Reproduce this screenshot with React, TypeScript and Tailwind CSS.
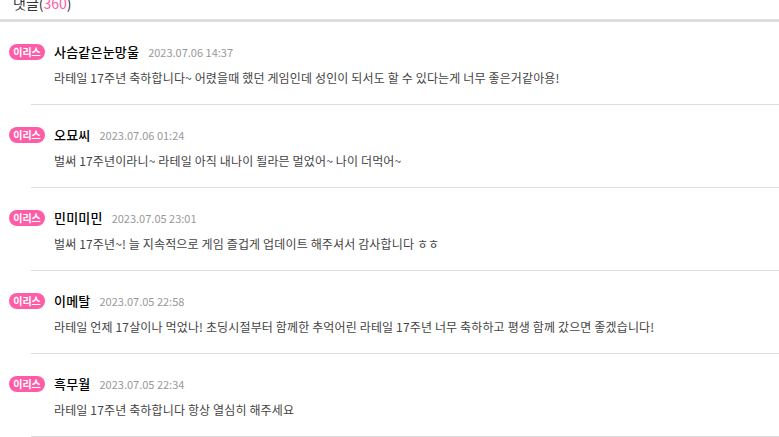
const comments = [
  { name: '사슴같은눈망울', date: '2023.07.06 14:37', text: '라테일 17주년 축하합니다~ 어렸을때 했던 게임인데 성인이 되서도 할 수 있다는게 너무 좋은거같아용!' },
  { name: '오묘씨', date: '2023.07.06 01:24', text: '벌써 17주년이라니~ 라테일 아직 내나이 될라믄 멀었어~ 나이 더먹어~' },
  { name: '민미미민', date: '2023.07.05 23:01', text: '벌써 17주년~! 늘 지속적으로 게임 즐겁게 업데이트 해주셔서 감사합니다 ㅎㅎ' },
  { name: '이메탈', date: '2023.07.05 22:58', text: '라테일 언제 17살이나 먹었나! 초딩시절부터 함께한 추억어린 라테일 17주년 너무 축하하고 평생 함께 갔으면 좋겠습니다!' },
  { name: '흑무월', date: '2023.07.05 22:34', text: '라테일 17주년 축하합니다 항상 열심히 해주세요' },
]

export default function App() {
  return (
    <div className="w-[779px] h-[437px] overflow-hidden bg-white font-['Noto_Sans_CJK_KR','Noto_Sans',sans-serif]">
      <div className="h-[19px] overflow-hidden pl-[13px]">
        <div className="-mt-[6px] text-[14px] leading-[18px] text-[#333]">
          댓글(<span className="text-[#ff5ca8]">360</span>)
        </div>
      </div>
      <div className="h-[3px] bg-[#dddddd]" />
      {comments.map((c) => (
        <div key={c.date}>
          <div className="pl-[9px] pt-[21px] pb-[17px]">
            <div className="flex h-[18px] items-center">
              <span className="flex h-[16px] w-[36px] items-center justify-center rounded-full bg-[#ff5ca8] text-[10px] font-bold leading-none text-white">
                이리스
              </span>
              <span className="ml-[9px] text-[13px] font-medium tracking-[0.2px] text-black">{c.name}</span>
              <span className="ml-[9px] text-[11px] text-[#999]">{c.date}</span>
            </div>
            <p className="mt-[8px] pl-[45px] text-[12px] leading-[18px] tracking-[0.14px] text-[#444]">{c.text}</p>
          </div>
          <div className="ml-[31px] h-px bg-[#dddddd]" />
        </div>
      ))}
    </div>
  )
}
